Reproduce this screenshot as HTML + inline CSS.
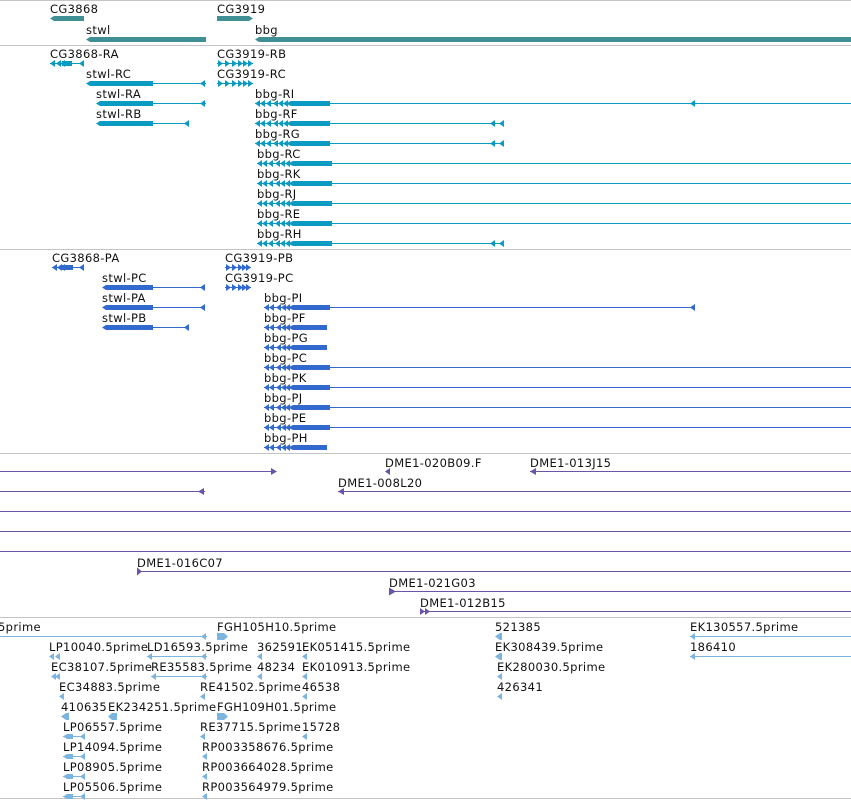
<!DOCTYPE html>
<html><head><meta charset="utf-8"><style>
html,body{margin:0;padding:0;background:#fff;width:851px;height:801px;overflow:hidden}
svg{display:block}
rect{shape-rendering:crispEdges}
text{font-family:"DejaVu Sans","Liberation Sans",sans-serif;font-size:11.5px;letter-spacing:0.35px;fill:#111}
</style></head><body>
<svg width="851" height="801" viewBox="0 0 851 801" xmlns="http://www.w3.org/2000/svg">
<defs>
<polygon id="la" points="0,0 6,-3.5 6,3.5"/>
<polygon id="ra" points="0,0 -6,-3.5 -6,3.5"/>
<polygon id="sla" points="0,0 5,-3.5 5,3.5"/>
<polygon id="sra" points="0,0 -5,-3.5 -5,3.5"/>
</defs>
<g fill="#c4c4c4">
<rect x="0" y="0" width="851" height="1"/>
<rect x="0" y="45" width="851" height="1"/>
<rect x="0" y="249" width="851" height="1"/>
<rect x="0" y="453" width="851" height="1"/>
<rect x="0" y="617" width="851" height="1"/>
<rect x="0" y="798" width="851" height="1"/>
</g>

<g fill="#3f8f95">
<text x="50" y="13">CG3868</text>
<polygon points="50,18.5 54,16 84,16 84,21 54,21"/>
<text x="86" y="34">stwl</text>
<polygon points="86,39.5 90,37 206,37 206,42 90,42"/>
<text x="217" y="13">CG3919</text>
<polygon points="217,16 249,16 253,18.5 249,21 217,21"/>
<text x="255" y="34">bbg</text>
<polygon points="255,39.5 259,37 851,37 851,42 259,42"/>
</g>

<g fill="#0a9bc2">
<text x="50" y="58">CG3868-RA</text>
<rect x="50" y="63" width="34" height="1"/>
<use href="#sla" x="50" y="63.5"/><use href="#sla" x="56" y="63.5"/>
<rect x="62" y="61" width="10" height="5"/><use href="#sla" x="60" y="63.5"/><use href="#sla" x="79" y="63.5"/>
<text x="86" y="78">stwl-RC</text>
<polygon points="86,83.5 90,81 153,81 153,86 90,86"/>
<rect x="153" y="83" width="53" height="1"/><use href="#sla" x="200" y="83.5"/>
<text x="96" y="98">stwl-RA</text>
<polygon points="96,103.5 100,101 153,101 153,106 100,106"/>
<rect x="153" y="103" width="53" height="1"/><use href="#sla" x="200" y="103.5"/>
<text x="96" y="118">stwl-RB</text>
<polygon points="96,123.5 100,121 153,121 153,126 100,126"/>
<rect x="153" y="123" width="36" height="1"/><use href="#sla" x="184" y="123.5"/>

<text x="217" y="58">CG3919-RB</text>
<rect x="217" y="63" width="36" height="1"/>
<use href="#sra" x="223" y="63.5"/><use href="#sra" x="230" y="63.5"/><use href="#sra" x="237" y="63.5"/><use href="#sra" x="243" y="63.5"/><use href="#sra" x="248" y="63.5"/><use href="#sra" x="253" y="63.5"/>
<text x="217" y="78">CG3919-RC</text>
<rect x="217" y="83" width="36" height="1"/>
<use href="#sra" x="223" y="83.5"/><use href="#sra" x="230" y="83.5"/><use href="#sra" x="237" y="83.5"/><use href="#sra" x="243" y="83.5"/><use href="#sra" x="248" y="83.5"/><use href="#sra" x="253" y="83.5"/>

<text x="255" y="98">bbg-RI</text>
<text x="255" y="118">bbg-RF</text>
<text x="255" y="138">bbg-RG</text>
<text x="257" y="158">bbg-RC</text>
<text x="257" y="178">bbg-RK</text>
<text x="257" y="198">bbg-RJ</text>
<text x="257" y="218">bbg-RE</text>
<text x="257" y="238">bbg-RH</text>
<g id="bbgR">
<rect x="255" y="103" width="35" height="1"/>
<use href="#sla" x="255" y="103.5"/><use href="#sla" x="260" y="103.5"/><use href="#sla" x="266" y="103.5"/>
<use href="#sla" x="273" y="103.5"/><use href="#sla" x="278" y="103.5"/><use href="#sla" x="283" y="103.5"/>
<polygon points="286,103.5 291,101 330,101 330,106 291,106"/>
</g>
<rect x="330" y="103" width="521" height="1"/><use href="#sla" x="690" y="103.5"/>
<use href="#bbgR" y="20"/><rect x="330" y="123" width="174" height="1"/><use href="#sla" x="490" y="123.5"/><use href="#sla" x="499" y="123.5"/>
<use href="#bbgR" y="40"/><rect x="330" y="143" width="174" height="1"/><use href="#sla" x="490" y="143.5"/><use href="#sla" x="499" y="143.5"/>
<use href="#bbgR" x="2" y="60"/><rect x="330" y="163" width="521" height="1"/>
<use href="#bbgR" x="2" y="80"/><rect x="330" y="183" width="521" height="1"/>
<use href="#bbgR" x="2" y="100"/><rect x="330" y="203" width="521" height="1"/>
<use href="#bbgR" x="2" y="120"/><rect x="330" y="223" width="521" height="1"/>
<use href="#bbgR" x="2" y="140"/><rect x="330" y="243" width="174" height="1"/><use href="#sla" x="490" y="243.5"/><use href="#sla" x="499" y="243.5"/>
</g>

<g fill="#3169cf">
<text x="52" y="262">CG3868-PA</text>
<rect x="52" y="267" width="32" height="1"/>
<use href="#sla" x="52" y="267.5"/><use href="#sla" x="57" y="267.5"/>
<rect x="62" y="265" width="11" height="5"/><use href="#sla" x="60" y="267.5"/><use href="#sla" x="79" y="267.5"/>
<text x="102" y="282">stwl-PC</text>
<polygon points="102,287.5 106,285 153,285 153,290 106,290"/>
<rect x="153" y="287" width="52" height="1"/><use href="#sla" x="200" y="287.5"/>
<text x="102" y="302">stwl-PA</text>
<polygon points="102,307.5 106,305 153,305 153,310 106,310"/>
<rect x="153" y="307" width="52" height="1"/><use href="#sla" x="200" y="307.5"/>
<text x="102" y="322">stwl-PB</text>
<polygon points="102,327.5 106,325 153,325 153,330 106,330"/>
<rect x="153" y="327" width="36" height="1"/><use href="#sla" x="184" y="327.5"/>
<text x="225" y="262">CG3919-PB</text>
<rect x="225" y="267" width="26" height="1"/>
<use href="#sra" x="231" y="267.5"/><use href="#sra" x="237" y="267.5"/><use href="#sra" x="243" y="267.5"/><use href="#sra" x="247" y="267.5"/><use href="#sra" x="251" y="267.5"/>
<text x="225" y="282">CG3919-PC</text>
<rect x="225" y="287" width="26" height="1"/>
<use href="#sra" x="231" y="287.5"/><use href="#sra" x="237" y="287.5"/><use href="#sra" x="243" y="287.5"/><use href="#sra" x="247" y="287.5"/><use href="#sra" x="251" y="287.5"/>
<text x="264" y="302">bbg-PI</text>
<text x="264" y="322">bbg-PF</text>
<text x="264" y="342">bbg-PG</text>
<text x="264" y="362">bbg-PC</text>
<text x="264" y="382">bbg-PK</text>
<text x="264" y="402">bbg-PJ</text>
<text x="264" y="422">bbg-PE</text>
<text x="264" y="442">bbg-PH</text>
<g id="bbgP">
<rect x="264" y="307" width="30" height="1"/>
<use href="#sla" x="264" y="307.5"/><use href="#sla" x="269" y="307.5"/><use href="#sla" x="276" y="307.5"/><use href="#sla" x="281" y="307.5"/><use href="#sla" x="285" y="307.5"/>
<polygon points="288,307.5 293,305 330,305 330,310 293,310"/>
</g>
<rect x="330" y="307" width="365" height="1"/><use href="#sla" x="690" y="307.5"/>
<use href="#bbgP" y="20"/><rect x="327" y="324" width="4" height="7" fill="#fff"/>
<use href="#bbgP" y="40"/><rect x="327" y="344" width="4" height="7" fill="#fff"/>
<use href="#bbgP" y="60"/><rect x="330" y="367" width="521" height="1"/>
<use href="#bbgP" y="80"/><rect x="330" y="387" width="521" height="1"/>
<use href="#bbgP" y="100"/><rect x="330" y="407" width="521" height="1"/>
<use href="#bbgP" y="120"/><rect x="330" y="427" width="521" height="1"/>
<use href="#bbgP" y="140"/><rect x="327" y="444" width="4" height="7" fill="#fff"/>
</g>

<g fill="#6a54a8">
<rect x="0" y="471" width="276" height="1"/><use href="#ra" x="277" y="471.5"/>
<text x="385" y="467">DME1-020B09.F</text>
<use href="#sla" x="385" y="471.5"/>
<text x="530" y="467">DME1-013J15</text>
<rect x="530" y="471" width="321" height="1"/><use href="#la" x="530" y="471.5"/>
<rect x="0" y="491" width="205" height="1"/><use href="#la" x="198" y="491.5"/>
<text x="338" y="487">DME1-008L20</text>
<rect x="338" y="491" width="513" height="1"/><use href="#la" x="338" y="491.5"/>
<rect x="0" y="511" width="851" height="1"/>
<rect x="0" y="531" width="851" height="1"/>
<rect x="0" y="551" width="851" height="1"/>
<text x="137" y="567">DME1-016C07</text>
<rect x="137" y="571" width="714" height="1"/><polygon points="137,567.5 142,571.5 137,575.5"/>
<text x="389" y="587">DME1-021G03</text>
<rect x="389" y="591" width="462" height="1"/><polygon points="389,587.5 396,591.5 389,595.5"/>
<text x="420" y="607">DME1-012B15</text>
<rect x="420" y="611" width="431" height="1"/><use href="#sra" x="425" y="611.5"/><use href="#sra" x="430" y="611.5"/>
</g>

<g fill="#7ab4df">
<text x="-2" y="631">5prime</text>
<rect x="0" y="636" width="207" height="1"/><use href="#sla" x="201" y="636.5"/>
<text x="217" y="631">FGH105H10.5prime</text>
<polygon points="217,633 224,633 228,636.5 224,640 217,640"/>
<text x="495" y="631">521385</text>
<polygon points="495,636.5 500,633 502,633 502,640 500,640"/>
<text x="690" y="631">EK130557.5prime</text>
<rect x="690" y="636" width="161" height="1"/><use href="#sla" x="690" y="636.5"/>

<text x="49" y="651">LP10040.5prime</text>
<use href="#sla" x="49" y="656.5"/><use href="#sla" x="55" y="656.5"/>
<text x="147" y="651">LD16593.5prime</text>
<rect x="147" y="656" width="60" height="1"/><use href="#sla" x="147" y="656.5"/><use href="#sla" x="201" y="656.5"/>
<text x="257" y="651">362591</text><use href="#sla" x="257" y="656.5"/>
<text x="302" y="651">EK051415.5prime</text><use href="#sla" x="302" y="656.5"/>
<text x="495" y="651">EK308439.5prime</text><polygon points="495,656.5 500,653 502,653 502,660 500,660"/>
<text x="690" y="651">186410</text>
<rect x="690" y="656" width="161" height="1"/><use href="#sla" x="690" y="656.5"/>

<text x="51" y="671">EC38107.5prime</text>
<use href="#sla" x="51" y="676.5"/><use href="#sla" x="55" y="676.5"/>
<text x="151" y="671">RE35583.5prime</text>
<rect x="151" y="676" width="56" height="1"/><use href="#sla" x="151" y="676.5"/><use href="#sla" x="201" y="676.5"/>
<text x="257" y="671">48234</text><use href="#sla" x="257" y="676.5"/>
<text x="302" y="671">EK010913.5prime</text><use href="#sla" x="302" y="676.5"/>
<text x="497" y="671">EK280030.5prime</text><use href="#sla" x="497" y="676.5"/>

<text x="59" y="691">EC34883.5prime</text><use href="#sla" x="59" y="696.5"/>
<text x="200" y="691">RE41502.5prime</text><use href="#sla" x="200" y="696.5"/>
<text x="302" y="691">46538</text><use href="#sla" x="302" y="696.5"/>
<text x="497" y="691">426341</text><use href="#sla" x="497" y="696.5"/>

<text x="61" y="711">410635</text>
<use href="#sla" x="61" y="716.5"/><use href="#sla" x="64" y="716.5"/><rect x="66" y="713" width="3" height="7"/>
<text x="108" y="711">EK234251.5prime</text>
<polygon points="108,716.5 112,713 117,713 117,720 112,720"/>
<text x="217" y="711">FGH109H01.5prime</text>
<polygon points="217,713 224,713 228,716.5 224,720 217,720"/>

<g id="lp">
<rect x="63" y="736" width="22" height="1"/>
<polygon points="63,736.5 67,734 73,734 73,739 67,739"/>
<use href="#sla" x="80" y="736.5"/>
</g>
<text x="63" y="731">LP06557.5prime</text>
<text x="200" y="731">RE37715.5prime</text><use href="#sla" x="200" y="736.5"/>
<text x="302" y="731">15728</text><use href="#sla" x="302" y="736.5"/>
<text x="63" y="751">LP14094.5prime</text><use href="#lp" y="20"/>
<text x="202" y="751">RP003358676.5prime</text><use href="#sla" x="202" y="756.5"/>
<text x="63" y="771">LP08905.5prime</text><use href="#lp" y="40"/>
<text x="202" y="771">RP003664028.5prime</text><use href="#sla" x="202" y="776.5"/>
<text x="63" y="791">LP05506.5prime</text><use href="#lp" y="60"/>
<text x="202" y="791">RP003564979.5prime</text><use href="#sla" x="202" y="796.5"/>
</g>
</svg>
</body></html>
